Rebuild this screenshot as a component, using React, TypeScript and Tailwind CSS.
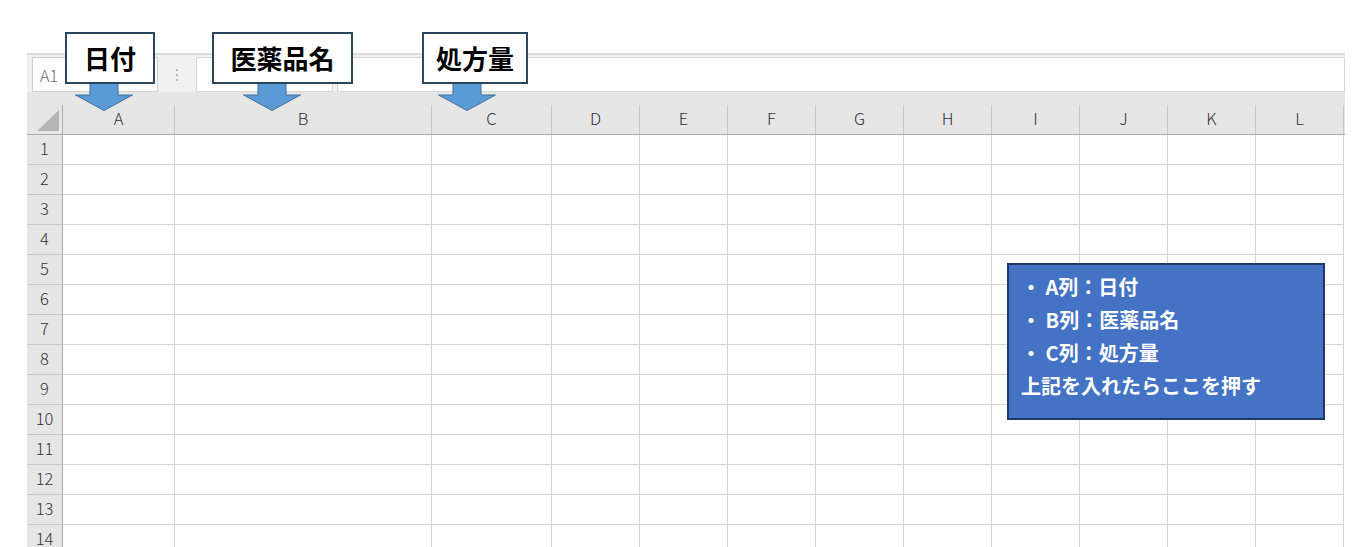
import React from "react";

const cols: { label: string; w: string }[] = [
  { label: "A", w: "w-[112px]" },
  { label: "B", w: "w-[257px]" },
  { label: "C", w: "w-[120px]" },
  { label: "D", w: "w-[88px]" },
  { label: "E", w: "w-[88px]" },
  { label: "F", w: "w-[88px]" },
  { label: "G", w: "w-[88px]" },
  { label: "H", w: "w-[88px]" },
  { label: "I", w: "w-[88px]" },
  { label: "J", w: "w-[88px]" },
  { label: "K", w: "w-[88px]" },
  { label: "L", w: "w-[88px]" },
];

const rows = Array.from({ length: 14 }, (_, i) => i + 1);

function Arrow({ left }: { left: number }) {
  return (
    <svg
      className="absolute top-[83px]"
      style={{ left }}
      width="60"
      height="29"
      viewBox="0 0 60 29"
    >
      <polygon
        points="16,0.5 44,0.5 44,12 58.5,12 30,27.5 1.5,12 16,12"
        fill="#5b9bd5"
        stroke="#41719c"
        strokeWidth="1"
      />
    </svg>
  );
}

function Callout({ text, cls }: { text: string; cls: string }) {
  return (
    <div
      className={`absolute top-[32px] h-[52px] bg-white border-2 border-[#2b4660] flex items-center justify-center text-[26px] font-bold text-black leading-none ${cls}`}
    >
      {text}
    </div>
  );
}

export default function App() {
  return (
    <div className="relative w-[1361px] h-[547px] overflow-hidden bg-white font-['Noto_Sans_CJK_JP','Noto_Sans',sans-serif]">
      <div className="ml-[27px] pt-[53px] w-[1318px] flex flex-col">
        <div className="h-[2px] bg-[#dcdcdc]" />
        <div className="h-[37px] bg-[#f1f1f1] flex items-end">
          <div className="ml-[5px] w-[126px] h-[35px] bg-white border border-[#d0d0d0] flex items-center pl-[7px] text-[16px] text-[#6b6b6b] font-light">
            A1
          </div>
          <div className="w-[38px] h-[35px] flex flex-col items-center justify-center gap-[3px]">
            <div className="w-[2px] h-[2px] bg-[#b5b5b5]" />
            <div className="w-[2px] h-[2px] bg-[#b5b5b5]" />
            <div className="w-[2px] h-[2px] bg-[#b5b5b5]" />
          </div>
          <div className="w-[137px] h-[35px] bg-white border border-[#d6d6d6]" />
          <div className="ml-[4px] flex-1 h-[35px] bg-white border border-[#d6d6d6]" />
        </div>
        <div className="h-[13px] bg-[#e6e6e6]" />
        <div className="flex h-[30px] bg-[#e6e6e6] border-b border-[#ababab]">
          <div className="w-[36px] h-full border-r border-[#ababab] relative">
            <svg className="absolute right-[3px] bottom-[3px]" width="22" height="21" viewBox="0 0 22 21">
              <polygon points="22,0 22,21 0,21" fill="#b5b5b5" />
            </svg>
          </div>
          {cols.map((c) => (
            <div
              key={c.label}
              className={`${c.w} h-full border-r border-[#c6c6c6] flex items-center justify-center pb-[3px] text-[16.5px] text-[#333333] font-light`}
            >
              {c.label}
            </div>
          ))}
        </div>
        {rows.map((r) => (
          <div key={r} className="flex h-[30px] shrink-0">
            <div className="w-[36px] h-full bg-[#e6e6e6] border-r border-[#ababab] border-b border-b-[#c8c8c8] flex items-center justify-center pb-[2px] text-[16.5px] text-[#333333] font-light">
              {r}
            </div>
            {cols.map((c) => (
              <div
                key={c.label}
                className={`${c.w} h-full border-r border-b border-[#d4d4d4]`}
              />
            ))}
          </div>
        ))}
      </div>

      <Arrow left={74} />
      <Arrow left={242} />
      <Arrow left={437} />
      <Callout text="日付" cls="left-[65px] w-[90px]" />
      <Callout text="医薬品名" cls="left-[212px] w-[141px]" />
      <Callout text="処方量" cls="left-[422px] w-[106px]" />

      <div className="absolute left-[1007px] top-[263px] w-[318px] h-[157px] bg-[#4472c4] border-2 border-[#1f3864] pl-[12px] pt-[5px] text-white font-bold text-[20px] leading-[33px]">
        <div>・ A列：日付</div>
        <div>・ B列：医薬品名</div>
        <div>・ C列：処方量</div>
        <div>上記を入れたらここを押す</div>
      </div>
    </div>
  );
}
